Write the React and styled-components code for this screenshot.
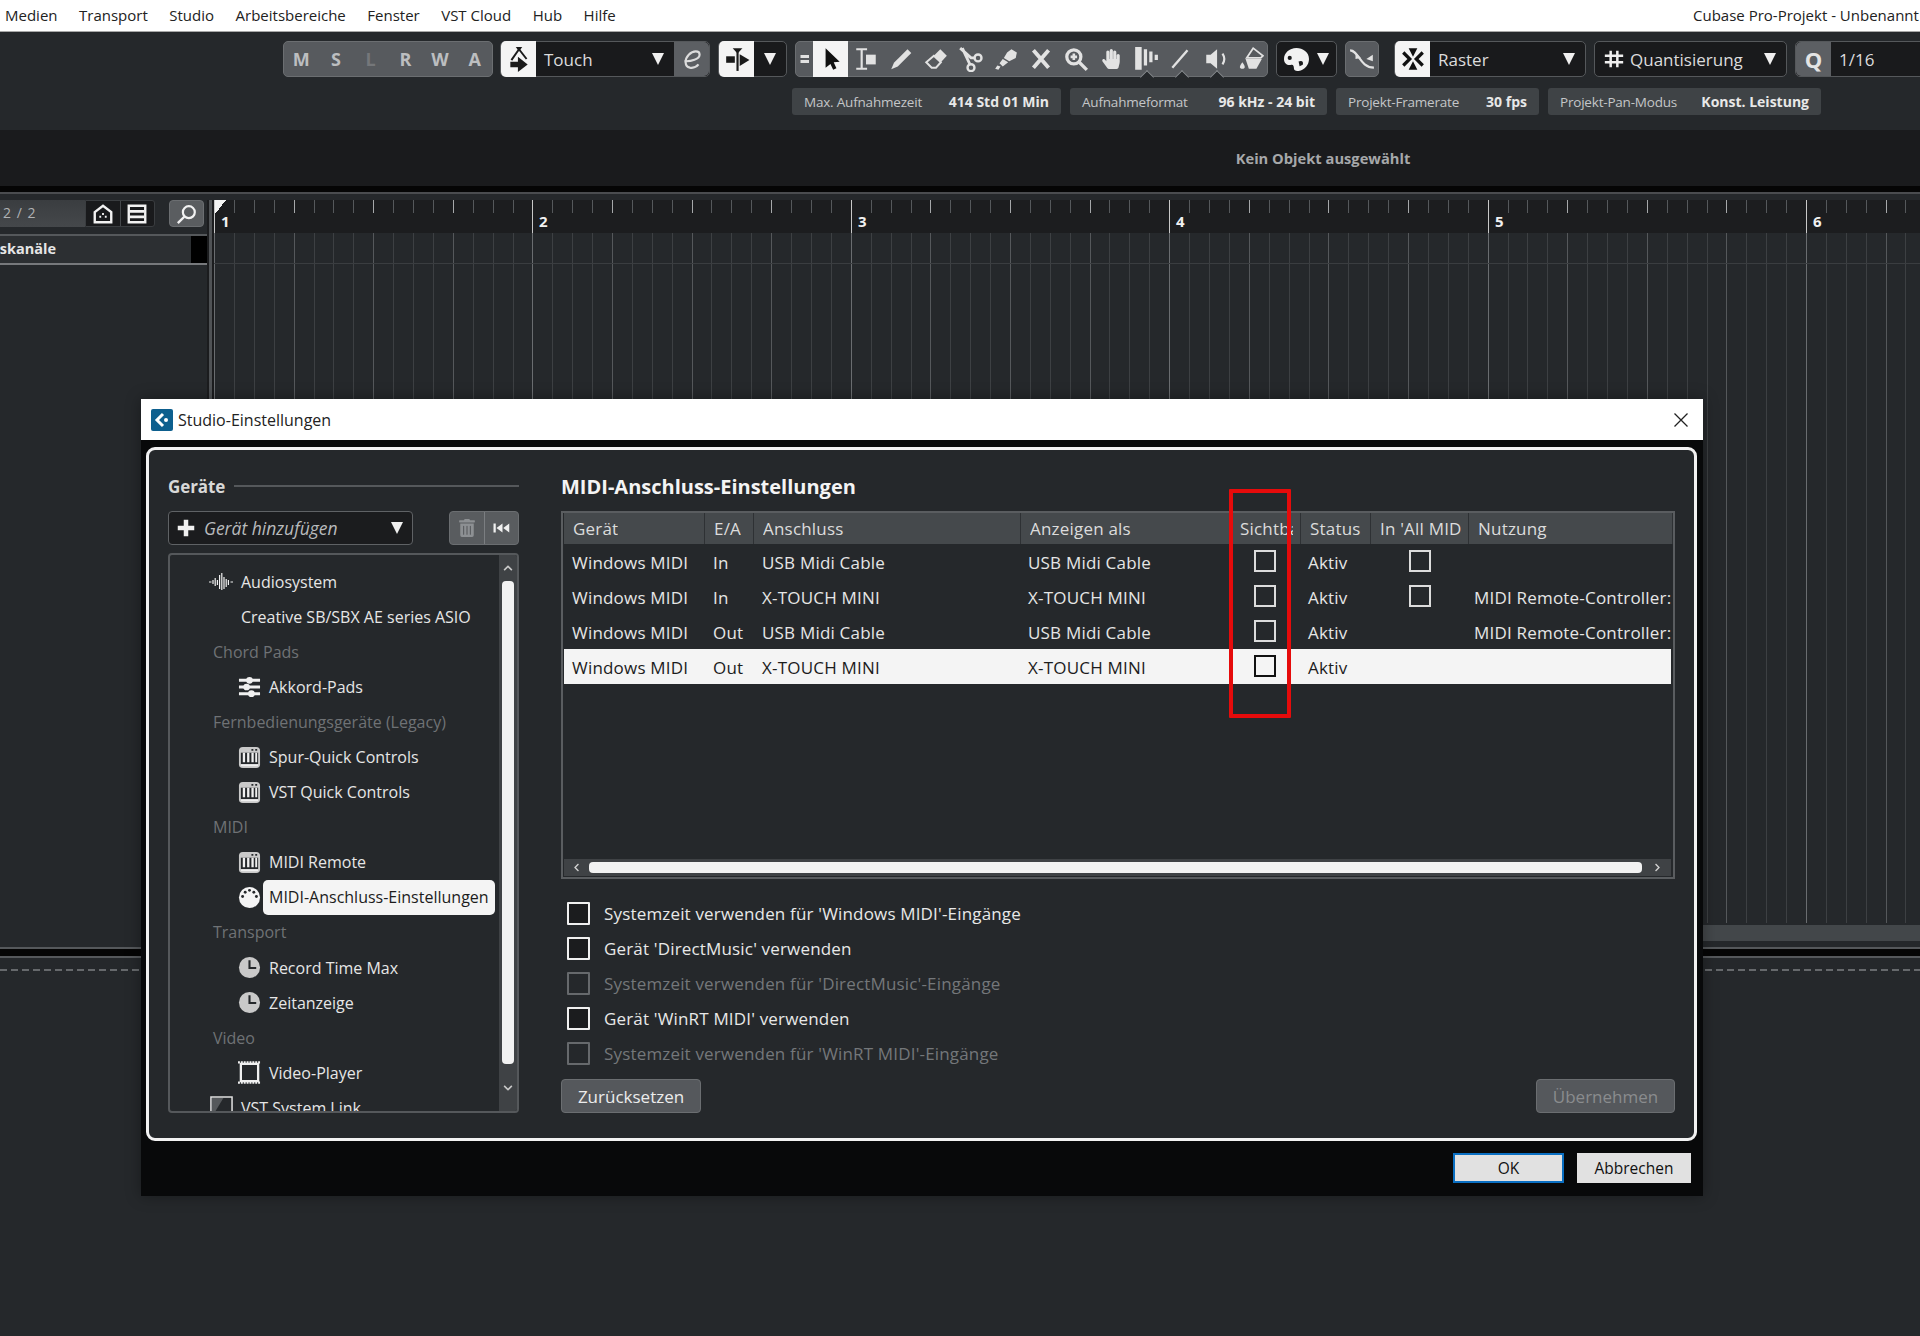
import React from 'react';
import styled, { createGlobalStyle } from 'styled-components';
import { FaHandPaper, FaTrashAlt, FaChevronUp, FaChevronDown, FaChevronLeft, FaChevronRight } from 'react-icons/fa';

const GlobalStyle = createGlobalStyle`
  html, body {
    margin: 0;
    padding: 0;
    background: #25282b;
  }
  * {
    box-sizing: border-box;
  }
  body {
    font-family: "Open Sans", "Liberation Sans", sans-serif;
    font-size: 15px;
    color: #e6e6e6;
  }
`;

const Page = styled.div`
  position: relative;
  width: 1920px;
  height: 1336px;
  overflow: hidden;
  background: #25282b;
  display: flex;
  flex-direction: column;
`;

/* ---------- menu ---------- */

const MenuBar = styled.div`
  height: 32px;
  flex: none;
  background: #fff;
  border-bottom: 1px solid #a8a8a8;
  display: flex;
  align-items: center;
  justify-content: space-between;
  padding: 0 0 2px 5px;
  color: #222;
  font-size: 15px;
  overflow: hidden;
  white-space: nowrap;
`;

const MenuItems = styled.div`
  display: flex;
  gap: 21.5px;
`;

const WindowTitle = styled.div`
  width: 227px;
  overflow: hidden;
`;

/* ---------- toolbar ---------- */

const Toolbar = styled.div`
  height: 98px;
  flex: none;
  background: #25282b;
  padding: 9px 0 0 283px;
  overflow: hidden;
`;

const ToolRow = styled.div`
  display: flex;
  gap: 8px;
  height: 36px;
  width: 1700px;
`;

const Group = styled.div`
  width: ${p => p.$w}px;
  flex: none;
  height: 36px;
  display: flex;
  align-items: stretch;
  border-radius: 5px;
  border: 1px solid ${p => (p.$dark ? '#55585b' : '#6b6e71')};
  background: ${p => (p.$dark ? '#191a1c' : '#575a5e')};
  margin-left: ${p => p.$ml || 0}px;
  overflow: visible;
`;

const Letter = styled.span`
  flex: 1;
  display: flex;
  align-items: center;
  justify-content: center;
  font-size: 18px;
  font-weight: 700;
  color: ${p => (p.$dim ? '#75777a' : '#bcbec0')};
`;

const WhiteCell = styled.div`
  width: ${p => p.$w || 35}px;
  flex: none;
  margin: -1px 0;
  background: #f4f4f4;
  display: flex;
  align-items: center;
  justify-content: center;
  border-radius: ${p => p.$r || '5px 0 0 5px'};
  position: relative;
`;

const GreyCell = styled.div`
  width: ${p => p.$w || 35}px;
  flex: none;
  display: flex;
  align-items: center;
  justify-content: center;
  background: #5c5f63;
  border-radius: ${p => p.$r || '0'};
  color: #e4e4e4;
  font-weight: 700;
  font-size: 22px;
`;

const SelectBody = styled.div`
  flex: 1;
  display: flex;
  align-items: center;
  justify-content: space-between;
  padding: 0 ${p => p.$pr || 10}px 0 ${p => p.$pl || 8}px;
  font-size: 17px;
  color: #dcdcdc;
  white-space: nowrap;
`;

const SelectLabel = styled.span`
  display: flex;
  align-items: center;
  gap: 6px;
`;

const Caret = styled.span`
  width: 0;
  height: 0;
  flex: none;
  border-left: 6px solid transparent;
  border-right: 6px solid transparent;
  border-top: 12px solid #f0f0f0;
`;

const Tool = styled.div`
  width: ${p => p.$w || 35}px;
  flex: none;
  position: relative;
  display: flex;
  align-items: center;
  justify-content: center;
  &::after {
    content: '';
    display: ${p => (p.$notch ? 'block' : 'none')};
    position: absolute;
    left: 50%;
    bottom: -1px;
    width: 9px;
    height: 9px;
    margin-left: -4px;
    transform: translateY(5px) rotate(45deg);
    border-top: 1px solid #8a8d90;
    border-left: 1px solid #8a8d90;
    background: #25282b;
  }
`;

const InfoRow = styled.div`
  display: flex;
  gap: 9px;
  margin: 11px 0 0 509px;
`;

const Chip = styled.div`
  width: ${p => p.$w}px;
  height: 27px;
  border-radius: 3px;
  background: #3f4346;
  padding: 0 12px;
  display: flex;
  align-items: center;
  justify-content: space-between;
  font-size: 13.5px;
  letter-spacing: -0.2px;
  color: #c4c6c8;
  white-space: nowrap;
`;

const ChipValue = styled.b`
  color: #e8e8e8;
  font-size: 14px;
  font-weight: 700;
  letter-spacing: 0;
`;

const ObjectBar = styled.div`
  height: 56px;
  flex: none;
  background: #1a1b1d;
  padding-left: 726px;
  display: flex;
  align-items: center;
  justify-content: center;
  font-size: 14.7px;
  font-weight: 700;
  color: #a6a8aa;
`;

const BlackBar = styled.div`
  height: 8px;
  flex: none;
  background: #050505;
  border-bottom: 2px solid #4a4c4f;
`;

/* ---------- project window ---------- */

const Workspace = styled.div`
  height: 753px;
  flex: none;
  display: flex;
  background: #25282b;
  padding-top: 6px;
`;

const TrackColumn = styled.div`
  width: 207px;
  flex: none;
`;

const TrackTools = styled.div`
  height: 27px;
  display: flex;
  align-items: stretch;
`;

const TrackCount = styled.div`
  width: 85px;
  background: linear-gradient(#3a3d40, #45484b);
  padding: 3px 0 0 3px;
  font-size: 14px;
  letter-spacing: 1px;
  color: #b0b2b4;
`;

const IconPair = styled.div`
  width: 70px;
  display: flex;
  background: #191a1c;
  border: 1px solid #3a3d40;
  border-radius: 0 3px 3px 0;
`;

const PairCell = styled.div`
  flex: 1;
  display: flex;
  align-items: center;
  justify-content: center;
  border-left: ${p => (p.$sep ? '1px solid #45484b' : 'none')};
`;

const SearchButton = styled.div`
  width: 35px;
  margin-left: 14px;
  border-radius: 4px;
  background: #5a5d60;
  border: 1px solid #6b6e71;
  display: flex;
  align-items: center;
  justify-content: center;
`;

const TrackRow = styled.div`
  height: 31px;
  margin-top: 7px;
  border-top: 2px solid #55585b;
  border-bottom: 2px solid #77797c;
  background: #2c2f32;
  display: flex;
  justify-content: space-between;
  overflow: hidden;
`;

const TrackName = styled.div`
  font-size: 14.5px;
  font-weight: 700;
  color: #e6e6e6;
  margin-left: -57px;
  padding-top: 3px;
  white-space: nowrap;
`;

const TrackFlag = styled.div`
  width: 16px;
  background: #000;
`;

const Divider = styled.div`
  width: 7px;
  flex: none;
  background: #1b1c1e;
  position: relative;
  &::before {
    content: '';
    position: absolute;
    left: 2px;
    top: 0;
    bottom: 6px;
    width: 3px;
    background: #4f5255;
  }
`;

const Arrangement = styled.div`
  flex: 1;
  min-width: 0;
  display: flex;
  flex-direction: column;
`;

const RulerSvg = styled.svg`
  display: block;
  flex: none;
  background: #1c1d1f;
`;

const GridSvg = styled.svg`
  display: block;
  flex: none;
`;

const ScrollBand = styled.div`
  height: 16px;
  flex: none;
  margin-top: 2px;
  background: #43474a;
`;

const LowerZone = styled.div`
  flex: 1;
  border-top: 2px solid #55585b;
  background: #25282b;
`;

const ZoneGap = styled.div`
  height: 7px;
  background: #050505;
  border-bottom: 2px solid #55585b;
  box-sizing: content-box;
`;

const DashedLine = styled.div`
  margin-top: 11px;
  height: 2px;
  background: repeating-linear-gradient(90deg, #66696c 0 7px, transparent 7px 11px);
`;

/* ---------- dialog ---------- */

const Dialog = styled.div`
  position: absolute;
  left: 141px;
  top: 399px;
  width: 1562px;
  height: 797px;
  background: #08090a;
  box-shadow: 0 0 14px rgba(0, 0, 0, 0.35);
  display: flex;
  flex-direction: column;
`;

const TitleBar = styled.div`
  height: 41px;
  flex: none;
  background: #fff;
  color: #222;
  display: flex;
  align-items: center;
  justify-content: space-between;
  padding: 0 14px 0 10px;
  font-size: 16px;
`;

const TitleLeft = styled.div`
  display: flex;
  align-items: center;
  gap: 5px;
`;

const Panel = styled.div`
  height: 694px;
  flex: none;
  margin: 7px 6px 0 5px;
  border: 3px solid #f2f2f2;
  border-radius: 9px;
  background: #25282b;
  padding: 24px 19px 0 19px;
  display: flex;
  gap: 42px;
`;

const DeviceColumn = styled.div`
  width: 351px;
  flex: none;
`;

const SectionHead = styled.div`
  height: 24px;
  display: flex;
  align-items: center;
  gap: 9px;
  font-size: 17px;
  font-weight: 700;
  letter-spacing: -0.1px;
  color: #d8d8d8;
`;

const HeadRule = styled.div`
  flex: 1;
  height: 2px;
  background: #55585b;
`;

const DeviceTools = styled.div`
  display: flex;
  justify-content: space-between;
  margin-top: 13px;
`;

const AddDevice = styled.div`
  width: 245px;
  height: 34px;
  border-radius: 4px;
  border: 1px solid #5f6265;
  background: #1b1c1e;
  display: flex;
  align-items: center;
  padding: 0 9px 0 8px;
`;

const AddText = styled.span`
  flex: 1;
  margin-left: 9px;
  font-style: italic;
  font-size: 17.5px;
  color: #b8babc;
  white-space: nowrap;
`;

const DeviceButtons = styled.div`
  width: 70px;
  height: 34px;
  display: flex;
  border-radius: 4px;
  border: 1px solid #6b6e71;
  background: #595c5f;
`;

const DeviceButton = styled.div`
  flex: 1;
  display: flex;
  align-items: center;
  justify-content: center;
  border-left: ${p => (p.$sep ? '1px solid #7b7e81' : 'none')};
`;

const TreeBox = styled.div`
  height: 560px;
  margin-top: 8px;
  border: 2px solid #55585b;
  border-radius: 4px;
  display: flex;
  overflow: hidden;
`;

const TreeList = styled.div`
  flex: 1;
  min-width: 0;
  padding-top: 9px;
  overflow: hidden;
`;

const TreeRow = styled.div`
  height: 35.1px;
  display: flex;
  align-items: center;
  padding-left: ${p => p.$indent}px;
  font-size: 16px;
  white-space: nowrap;
  color: ${p => (p.$group ? '#6f7275' : '#e6e6e6')};
`;

const TreeIcon = styled.span`
  width: ${p => p.$w || 23}px;
  flex: none;
  margin-right: ${p => p.$gap || 8}px;
  display: flex;
  align-items: center;
  justify-content: center;
`;

const TreeLabel = styled.span`
  ${p => p.$selected && `
    background: #f4f4f4;
    color: #1c1c1c;
    border-radius: 5px;
    width: 232px;
    height: 35px;
    margin-left: -6px;
    padding-left: 6px;
    display: flex;
    align-items: center;
  `}
`;

const VScroll = styled.div`
  width: 18px;
  flex: none;
  background: #3f4245;
  display: flex;
  flex-direction: column;
  align-items: center;
  color: #c8c8c8;
`;

const VArrow = styled.div`
  height: ${p => p.$h}px;
  flex: none;
  display: flex;
  align-items: center;
  justify-content: center;
`;

const VThumb = styled.div`
  width: 12px;
  height: 483px;
  flex: none;
  border-radius: 4px;
  background: #f2f2f2;
`;

const MainColumn = styled.div`
  width: 1114px;
  flex: none;
`;

const MainTitle = styled.div`
  height: 24px;
  display: flex;
  align-items: center;
  font-size: 20px;
  font-weight: 700;
  color: #f4f4f4;
`;

const Table = styled.div`
  height: 368px;
  margin-top: 13px;
  border: 2px solid #5a5d60;
  display: flex;
  flex-direction: column;
`;

const columns = '141px 49px 267px 210px 70px 70px 98px 1fr';

const HeadRow = styled.div`
  display: grid;
  grid-template-columns: ${columns};
  height: 31px;
  flex: none;
  margin-left: 1px;
  background: #45494c;
`;

const HeadCell = styled.div`
  padding: 0 7px 0 ${p => p.$pl || 9}px;
  display: flex;
  align-items: center;
  border-right: 1px solid #2e3134;
  font-size: 17px;
  letter-spacing: 0.2px;
  color: #dcdcdc;
  white-space: nowrap;
  overflow: hidden;
`;

const HeadText = styled.span`
  display: block;
  overflow: hidden;
`;

const BodyRow = styled.div`
  display: grid;
  grid-template-columns: ${columns};
  height: 35px;
  flex: none;
  margin: 0 2px 0 1px;
  background: ${p => (p.$selected ? '#f4f4f4' : 'transparent')};
  color: ${p => (p.$selected ? '#1c1c1c' : '#e6e6e6')};
`;

const BodyCell = styled.div`
  padding-left: ${p => p.$pl || 0}px;
  padding-right: ${p => p.$pr || 0}px;
  padding-top: 1px;
  display: flex;
  align-items: center;
  justify-content: ${p => (p.$center ? 'center' : 'flex-start')};
  font-size: 17px;
  letter-spacing: 0.2px;
  white-space: nowrap;
  overflow: hidden;
`;

const SmallBox = styled.span`
  width: 22px;
  height: 22px;
  margin-bottom: 3px;
  border: 2px solid ${p => (p.$selected ? '#111' : '#dcdcdc')};
`;

const TableFill = styled.div`
  flex: 1;
`;

const HScroll = styled.div`
  height: 17px;
  flex: none;
  margin: 0 2px 1px 1px;
  background: #3f4245;
  display: flex;
  align-items: center;
  color: #d0d0d0;
`;

const HArrow = styled.div`
  width: ${p => p.$w}px;
  flex: none;
  display: flex;
  align-items: center;
  justify-content: center;
`;

const HThumb = styled.div`
  width: 1053px;
  height: 11px;
  flex: none;
  border-radius: 4px;
  background: #f2f2f2;
`;

const Options = styled.div`
  margin-top: 17px;
  padding-left: 6px;
`;

const OptionRow = styled.label`
  height: 35px;
  display: flex;
  align-items: center;
  gap: 14px;
  font-size: 17px;
  letter-spacing: 0.17px;
  color: ${p => (p.$off ? '#74777a' : '#e8e8e8')};
`;

const OptionBox = styled.span`
  width: 23px;
  height: 23px;
  flex: none;
  border-radius: 1px;
  border: 2px solid ${p => (p.$off ? '#66696c' : '#f0f0f0')};
  background: ${p => (p.$off ? 'transparent' : '#1b1c1e')};
`;

const PanelButtons = styled.div`
  display: flex;
  justify-content: space-between;
  margin-top: 8px;
`;

const PanelButton = styled.div`
  width: ${p => p.$w}px;
  height: 34px;
  border-radius: 4px;
  border: 1px solid #6b6e71;
  background: #55585c;
  display: flex;
  align-items: center;
  justify-content: center;
  font-size: 17px;
  color: ${p => (p.$off ? '#8a8c8e' : '#ececec')};
`;

const Footer = styled.div`
  display: flex;
  justify-content: flex-end;
  gap: 13px;
  padding: 12px 12px 0 0;
`;

const WinButton = styled.div`
  width: ${p => p.$w}px;
  height: 30px;
  background: #e1e1e1;
  border: ${p => (p.$focus ? '2px solid #0a6fc2' : 'none')};
  display: flex;
  align-items: center;
  justify-content: center;
  font-size: 15.5px;
  color: #111;
`;

const Annotation = styled.div`
  position: absolute;
  left: 1229px;
  top: 489px;
  width: 62px;
  height: 229px;
  border: 4px solid #e60b0b;
  border-radius: 1px;
`;

/* ---------- drawings ---------- */

const Ico = ({ size = 24, children, fill = 'none', ...rest }) => (
  <svg width={size} height={size} viewBox="0 0 24 24" fill={fill} {...rest}>
    {children}
  </svg>
);

const LIGHT = '#e2e2e2';

const AutoIcon = () => (
  <Ico size={26}>
    <path d="M12 3L5 13M12 3l7 9" stroke="#1a1a1a" strokeWidth="1.8" />
    <path d="M9 1h6l-3 4z" fill="#1a1a1a" />
    <path d="M4 14.5h7V10l9 7-9 7v-4.5H4z" fill="#1a1a1a" />
  </Ico>
);

const EIcon = () => (
  <Ico size={26}>
    <path d="M5 14c6 .5 14-2 14-6 0-4-6-4-10 0-4 4-4 11 1 12 3 .5 6-.5 8-3" stroke="#dcdcdc" strokeWidth="2" />
  </Ico>
);

const SplitIcon = () => (
  <Ico size={26}>
    <path d="M8 2h9l-4.5 5z" fill="#1a1a1a" />
    <path d="M12.5 4v19" stroke="#1a1a1a" strokeWidth="2" />
    <path d="M2 9.5h8v6H2z" fill="#1a1a1a" />
    <path d="M14.5 7.5l9 5.5-9 5.5z" fill="#1a1a1a" />
  </Ico>
);

const HandleIcon = () => (
  <Ico size={12}>
    <path d="M3 4h17v6H3zM3 14h17v6H3z" fill={LIGHT} />
  </Ico>
);

const ToolIcons = {
  arrow: <Ico size={26}><path d="M7 2v18l4.5-3.5L14 22l3-1.5-2.5-5.5 5.5-.5z" fill="#111" /></Ico>,
  range: (
    <Ico size={26}>
      <path d="M3 3h10M3 21h10M8 3v18" stroke={LIGHT} strokeWidth="2" />
      <path d="M12 8h9v9h-9z" fill={LIGHT} />
    </Ico>
  ),
  pen: <Ico size={26}><path d="M18 3l3.5 3.5L9 19l-6 2.5L5.5 15.5z" fill={LIGHT} /></Ico>,
  eraser: (
    <Ico size={26}>
      <path d="M16 3l6 6-5.5 6-6.5-6z" fill={LIGHT} />
      <path d="M10 9l6.5 6-4.5 5H8l-5-5z" stroke={LIGHT} strokeWidth="1.8" />
    </Ico>
  ),
  scissors: (
    <Ico size={26}>
      <path d="M2 2l10 9 3 0M4 2l7 15" stroke={LIGHT} strokeWidth="2.6" />
      <circle cx="18.5" cy="11" r="3.2" stroke={LIGHT} strokeWidth="2.2" />
      <circle cx="12" cy="20" r="3.2" stroke={LIGHT} strokeWidth="2.2" />
    </Ico>
  ),
  glue: (
    <Ico size={26}>
      <path d="M13 6l4-3 5 3-1 5-6 3-5-3z" fill={LIGHT} />
      <path d="M9 12l5 3-5 4-3-3zM4 18l3 1-2 3-3-1z" fill={LIGHT} />
    </Ico>
  ),
  mute: <Ico size={26}><path d="M5 4l14 16M19 4L5 20" stroke={LIGHT} strokeWidth="3.6" /></Ico>,
  zoom: (
    <Ico size={26}>
      <circle cx="10" cy="10" r="6.5" stroke={LIGHT} strokeWidth="3" />
      <path d="M15 15l7 7" stroke={LIGHT} strokeWidth="3" />
      <path d="M10 7v6M7 10h6" stroke={LIGHT} strokeWidth="2.4" />
    </Ico>
  ),
  hand: <FaHandPaper size={20} color={LIGHT} />,
  comp: <Ico size={26}><path d="M2 1h6v21H2zM10 3h3v15h-3zM15 5h3v10h-3zM20 8h3v5h-3z" fill={LIGHT} /></Ico>,
  line: <Ico size={26}><path d="M4 20L18 4" stroke={LIGHT} strokeWidth="2.2" /></Ico>,
  speaker: (
    <Ico size={26}>
      <path d="M3 8h4l6-5v18l-6-5H3z" fill={LIGHT} />
      <path d="M18 7c2 3 2 7 0 10" stroke={LIGHT} strokeWidth="2" />
    </Ico>
  ),
  bucket: (
    <Ico size={26}>
      <path d="M14 2l9 7-2 2H8z" stroke={LIGHT} strokeWidth="1.6" />
      <path d="M7 12h15l-5 9H10z" fill={LIGHT} />
      <path d="M4 15c-3 4-3 6 0 6s3-2 0-6z" fill={LIGHT} />
    </Ico>
  ),
};

const PaletteIcon = () => (
  <Ico size={25}>
    <path
      d="M12 1C5 1 0 6 0 11.5c0 5 4 6.5 7 5.5 2-.5 2.5 1.5 2.5 3.5 0 2 2 3 4.5 2.5 6-1 10-6 10-11.5C24 5 18 1 12 1z"
      fill="#f2f2f2"
    />
    <circle cx="5.5" cy="10.5" r="2" fill="#191a1c" />
    <path d="M14 14c3-1.5 5 0 4 3l-3 1.5z" fill="#191a1c" />
  </Ico>
);

const CurveIcon = () => (
  <Ico size={26}>
    <path d="M1 4c8 0 9 16 22 16" stroke={LIGHT} strokeWidth="2" />
    <path d="M6 6l5 5-5 1zM22 8l-6 4 6 2z" fill={LIGHT} />
  </Ico>
);

const SnapIcon = () => (
  <Ico size={26}>
    <path d="M8 2h8l-4 8zM8 22h8l-4-8z" fill="#111" />
    <path d="M3 6l6 6-6 6M21 6l-6 6 6 6" stroke="#111" strokeWidth="3" />
  </Ico>
);

const HashIcon = () => (
  <Ico size={20}>
    <path d="M8 2v20M16 2v20M1 8h22M1 16h22" stroke="#efefef" strokeWidth="3" />
  </Ico>
);

const HomeIcon = () => (
  <Ico size={22}>
    <path d="M3 10l9-7 9 7v11H3z" stroke="#f2f2f2" strokeWidth="2.6" />
    <path d="M8 14h2v2H8zM14 14h2v2h-2zM11 11h2v2h-2z" fill="#f2f2f2" />
  </Ico>
);

const ListIcon = () => (
  <Ico size={22}>
    <path d="M3 3h18v18H3z" stroke="#f2f2f2" strokeWidth="2.6" />
    <path d="M4 9h16M4 15h16" stroke="#f2f2f2" strokeWidth="3" />
  </Ico>
);

const SearchIcon = () => (
  <Ico size={22}>
    <circle cx="14" cy="10" r="6.5" stroke="#f2f2f2" strokeWidth="2.4" />
    <path d="M9 15l-7 7" stroke="#f2f2f2" strokeWidth="2.6" />
  </Ico>
);

const CubaseLogo = () => (
  <svg width="22" height="22" viewBox="0 0 22 22">
    <rect width="22" height="22" rx="2" fill="#0d5f8e" />
    <path d="M12 5l-6 6 6 6" stroke="#fff" strokeWidth="3" fill="none" />
    <circle cx="15" cy="11" r="2" fill="#fff" />
  </svg>
);

const CloseIcon = () => (
  <svg width="16" height="16" viewBox="0 0 16 16">
    <path d="M1.5 1.5l13 13M14.5 1.5l-13 13" stroke="#222" strokeWidth="1.3" />
  </svg>
);

const PlusIcon = () => (
  <Ico size={18}><path d="M9 1h6v8h8v6h-8v8H9v-8H1V9h8z" fill="#f0f0f0" /></Ico>
);

const SkipIcon = () => (
  <Ico size={18}><path d="M2 6h3v12H2zM14 6v12L6 12zM23 6v12l-8-6z" fill="#f0f0f0" /></Ico>
);

const WaveIcon = () => (
  <svg width="24" height="20" viewBox="0 0 24 20" fill="none">
    <path
      d="M0 10h2.5M4 8v4M6.2 6v8M8.4 8v5M10.6 3v14M12.8 1v17M15 5v12M17.2 7v8M19.4 8v5M21.5 10h2.5"
      stroke="#f0f0f0"
      strokeWidth="1.2"
    />
  </svg>
);

const PadsIcon = () => (
  <Ico size={23}>
    <path d="M1 4h22v3H1zM1 11h22v3H1zM1 18h22v3H1z" fill="#f0f0f0" />
    <circle cx="12" cy="5.5" r="3.5" fill="#f0f0f0" />
    <circle cx="9" cy="12.5" r="3.5" fill="#f0f0f0" />
    <circle cx="14" cy="19.5" r="3.5" fill="#f0f0f0" />
  </Ico>
);

const KeysIcon = () => (
  <Ico size={23}>
    <rect x="1" y="1" width="22" height="22" rx="4" fill="#c9c9c9" />
    <rect x="3" y="7" width="18" height="12" fill="#25282b" />
    <path d="M5 7h2.4v10H5zM9.5 7h2.4v10H9.5zM14 7h2.4v10H14zM18 7h2v10h-2zM3 19h18v2H3z" fill="#f0f0f0" />
    <path d="M14 3h2v2h-2zM18 3h2v2h-2z" fill="#25282b" />
  </Ico>
);

const DinIcon = () => (
  <Ico size={23}>
    <circle cx="12" cy="12" r="11" fill="#f4f4f4" />
    <circle cx="4.8" cy="11" r="1.5" fill="#25282b" />
    <circle cx="7.5" cy="6.5" r="1.5" fill="#25282b" />
    <circle cx="12" cy="4.5" r="1.5" fill="#25282b" />
    <circle cx="16.5" cy="6.5" r="1.5" fill="#25282b" />
    <circle cx="19.2" cy="11" r="1.5" fill="#25282b" />
  </Ico>
);

const ClockIcon = () => (
  <Ico size={23}>
    <circle cx="12" cy="12" r="11" fill="#c9c9c9" />
    <path d="M12 4.5V12.5h7" stroke="#25282b" strokeWidth="2.2" fill="none" />
  </Ico>
);

const FilmIcon = () => (
  <Ico size={23}>
    <path d="M3 3h18v18H3z" stroke="#f0f0f0" strokeWidth="2.4" />
    <path d="M0 1.5h24M0 22.5h24" stroke="#f0f0f0" strokeWidth="2.4" strokeDasharray="2 1" />
  </Ico>
);

const LinkIcon = () => (
  <Ico size={23}>
    <path d="M1 1h22v22H1z" stroke="#e0e0e0" strokeWidth="1.6" />
    <path d="M2 22L14 2H2z" fill="#55585b" />
  </Ico>
);

/* ---------- ruler + grid ---------- */

const ARR_WIDTH = 1706;
const SUB = 318.4 / 16;
const subTicks = Array.from({ length: 86 }, (_, i) => i);

const Ruler = () => (
  <RulerSvg width={ARR_WIDTH} height={33} shapeRendering="crispEdges">
    {subTicks.map(i => {
      const x = Math.round(i * SUB);
      const bar = i % 16 === 0;
      const beat = i % 4 === 0;
      return (
        <line
          key={i}
          x1={x + 0.5}
          x2={x + 0.5}
          y1={0}
          y2={bar ? 33 : 13}
          stroke={bar ? '#c8c8c8' : beat ? '#a6a8aa' : '#55585b'}
        />
      );
    })}
    {[1, 2, 3, 4, 5, 6].map(n => (
      <text
        key={n}
        x={Math.round((n - 1) * 318.4) + 7}
        y={27}
        fontFamily="Open Sans, sans-serif"
        fontSize="15"
        fontWeight="700"
        fill="#f0f0f0"
      >
        {n}
      </text>
    ))}
    <path d="M1 0h11L1 14z" fill="#f4f4f4" />
  </RulerSvg>
);

const ArrangeGrid = () => (
  <GridSvg width={ARR_WIDTH} height={690} shapeRendering="crispEdges">
    {subTicks.map(i => {
      const x = Math.round(i * SUB);
      return (
        <line
          key={i}
          x1={x + 0.5}
          x2={x + 0.5}
          y1={0}
          y2={690}
          stroke={i % 16 === 0 ? '#6a6d70' : i % 4 === 0 ? '#55585b' : '#3d4043'}
        />
      );
    })}
    <line x1={0} x2={ARR_WIDTH} y1={30.5} y2={30.5} stroke="#3a3d40" />
  </GridSvg>
);

/* ---------- data ---------- */

const tree = [
  { indent: 39, icon: <WaveIcon />, w: 24, label: 'Audiosystem' },
  { indent: 71, label: 'Creative SB/SBX AE series ASIO' },
  { indent: 43, group: true, label: 'Chord Pads' },
  { indent: 68, icon: <PadsIcon />, label: 'Akkord-Pads' },
  { indent: 43, group: true, label: 'Fernbedienungsgeräte (Legacy)' },
  { indent: 68, icon: <KeysIcon />, label: 'Spur-Quick Controls' },
  { indent: 68, icon: <KeysIcon />, label: 'VST Quick Controls' },
  { indent: 43, group: true, label: 'MIDI' },
  { indent: 68, icon: <KeysIcon />, label: 'MIDI Remote' },
  { indent: 68, icon: <DinIcon />, label: 'MIDI-Anschluss-Einstellungen', selected: true },
  { indent: 43, group: true, label: 'Transport' },
  { indent: 68, icon: <ClockIcon />, label: 'Record Time Max' },
  { indent: 68, icon: <ClockIcon />, label: 'Zeitanzeige' },
  { indent: 43, group: true, label: 'Video' },
  { indent: 68, icon: <FilmIcon />, label: 'Video-Player' },
  { indent: 40, icon: <LinkIcon />, label: 'VST System Link' },
];

const heads = ['Gerät', 'E/A', 'Anschluss', 'Anzeigen als', 'Sichtbar', 'Status', "In 'All MIDI'", 'Nutzung'];

const ports = [
  { io: 'In', port: 'USB Midi Cable', all: true },
  { io: 'In', port: 'X-TOUCH MINI', all: true, use: 'MIDI Remote-Controller:' },
  { io: 'Out', port: 'USB Midi Cable', use: 'MIDI Remote-Controller:' },
  { io: 'Out', port: 'X-TOUCH MINI', selected: true },
];

const options = [
  { label: "Systemzeit verwenden für 'Windows MIDI'-Eingänge" },
  { label: "Gerät 'DirectMusic' verwenden" },
  { label: "Systemzeit verwenden für 'DirectMusic'-Eingänge", off: true },
  { label: "Gerät 'WinRT MIDI' verwenden" },
  { label: "Systemzeit verwenden für 'WinRT MIDI'-Eingänge", off: true },
];

const menu = ['Medien', 'Transport', 'Studio', 'Arbeitsbereiche', 'Fenster', 'VST Cloud', 'Hub', 'Hilfe'];

const tools = [
  { key: 'range' },
  { key: 'pen' },
  { key: 'eraser' },
  { key: 'scissors' },
  { key: 'glue' },
  { key: 'mute' },
  { key: 'zoom' },
  { key: 'hand' },
  { key: 'comp', notch: true },
  { key: 'line', notch: true },
  { key: 'speaker', notch: true },
  { key: 'bucket' },
];

const App = () => (
  <Page>
    <GlobalStyle />
    <MenuBar>
      <MenuItems>
        {menu.map(m => (
          <span key={m}>{m}</span>
        ))}
      </MenuItems>
      <WindowTitle>Cubase Pro-Projekt - Unbenannt1</WindowTitle>
    </MenuBar>

    <Toolbar>
      <ToolRow>
        <Group $w={210}>
          <Letter>M</Letter>
          <Letter>S</Letter>
          <Letter $dim>L</Letter>
          <Letter>R</Letter>
          <Letter>W</Letter>
          <Letter>A</Letter>
        </Group>
        <Group $w={210} $dark $ml={-1}>
          <WhiteCell><AutoIcon /></WhiteCell>
          <SelectBody>
            Touch
            <Caret />
          </SelectBody>
          <GreyCell $r="0 5px 5px 0"><EIcon /></GreyCell>
        </Group>
        <Group $w={69} $dark>
          <WhiteCell><SplitIcon /></WhiteCell>
          <SelectBody $pr={10} $pl={10}><Caret /></SelectBody>
        </Group>
        <Group $w={473}>
          <Tool $w={17}><HandleIcon /></Tool>
          <WhiteCell $r="0"><Tool>{ToolIcons.arrow}</Tool></WhiteCell>
          {tools.map(t => (
            <Tool key={t.key} $notch={t.notch}>{ToolIcons[t.key]}</Tool>
          ))}
        </Group>
        <Group $w={61} $dark>
          <Tool $w={38}><PaletteIcon /></Tool>
          <SelectBody $pl={2} $pr={6}><Caret /></SelectBody>
        </Group>
        <Group $w={34}>
          <Tool $w={32}><CurveIcon /></Tool>
        </Group>
        <Group $w={192} $dark $ml={7}>
          <WhiteCell><SnapIcon /></WhiteCell>
          <SelectBody>
            Raster
            <Caret />
          </SelectBody>
        </Group>
        <Group $w={193} $dark>
          <SelectBody $pl={9}>
            <SelectLabel><HashIcon />Quantisierung</SelectLabel>
            <Caret />
          </SelectBody>
        </Group>
        <Group $w={160} $dark>
          <GreyCell $r="5px 0 0 5px">Q</GreyCell>
          <SelectBody>1/16</SelectBody>
        </Group>
      </ToolRow>
      <InfoRow>
        <Chip $w={269}>Max. Aufnahmezeit<ChipValue>414 Std 01 Min</ChipValue></Chip>
        <Chip $w={257}>Aufnahmeformat<ChipValue>96 kHz - 24 bit</ChipValue></Chip>
        <Chip $w={203}>Projekt-Framerate<ChipValue>30 fps</ChipValue></Chip>
        <Chip $w={273}>Projekt-Pan-Modus<ChipValue>Konst. Leistung</ChipValue></Chip>
      </InfoRow>
    </Toolbar>

    <ObjectBar>Kein Objekt ausgewählt</ObjectBar>
    <BlackBar />

    <Workspace>
      <TrackColumn>
        <TrackTools>
          <TrackCount>2 / 2</TrackCount>
          <IconPair>
            <PairCell><HomeIcon /></PairCell>
            <PairCell $sep><ListIcon /></PairCell>
          </IconPair>
          <SearchButton><SearchIcon /></SearchButton>
        </TrackTools>
        <TrackRow>
          <TrackName>Eingangskanäle</TrackName>
          <TrackFlag />
        </TrackRow>
      </TrackColumn>
      <Divider />
      <Arrangement>
        <Ruler />
        <ArrangeGrid />
        <ScrollBand />
      </Arrangement>
    </Workspace>

    <LowerZone>
      <ZoneGap />
      <DashedLine />
    </LowerZone>

    <Dialog>
      <TitleBar>
        <TitleLeft>
          <CubaseLogo />
          Studio-Einstellungen
        </TitleLeft>
        <CloseIcon />
      </TitleBar>
      <Panel>
        <DeviceColumn>
          <SectionHead>
            Geräte
            <HeadRule />
          </SectionHead>
          <DeviceTools>
            <AddDevice>
              <PlusIcon />
              <AddText>Gerät hinzufügen</AddText>
              <Caret />
            </AddDevice>
            <DeviceButtons>
              <DeviceButton><FaTrashAlt size={18} color="#8d9093" /></DeviceButton>
              <DeviceButton $sep><SkipIcon /></DeviceButton>
            </DeviceButtons>
          </DeviceTools>
          <TreeBox>
            <TreeList>
              {tree.map(row => (
                <TreeRow key={row.label} $indent={row.indent} $group={row.group}>
                  {row.icon && <TreeIcon $w={row.w}>{row.icon}</TreeIcon>}
                  <TreeLabel $selected={row.selected}>{row.label}</TreeLabel>
                </TreeRow>
              ))}
            </TreeList>
            <VScroll>
              <VArrow $h={26}><FaChevronUp size={10} /></VArrow>
              <VThumb />
              <VArrow $h={47}><FaChevronDown size={10} /></VArrow>
            </VScroll>
          </TreeBox>
        </DeviceColumn>

        <MainColumn>
          <MainTitle>MIDI-Anschluss-Einstellungen</MainTitle>
          <Table>
            <HeadRow>
              {heads.map(h => (
                <HeadCell key={h}><HeadText>{h}</HeadText></HeadCell>
              ))}
            </HeadRow>
            {ports.map((p, i) => (
              <BodyRow key={i} $selected={p.selected}>
                <BodyCell $pl={8}>Windows MIDI</BodyCell>
                <BodyCell $pl={8}>{p.io}</BodyCell>
                <BodyCell $pl={8}>{p.port}</BodyCell>
                <BodyCell $pl={7}>{p.port}</BodyCell>
                <BodyCell $center $pr={2}><SmallBox $selected={p.selected} /></BodyCell>
                <BodyCell $pl={7}>Aktiv</BodyCell>
                <BodyCell $center $pr={1}>{p.all && <SmallBox />}</BodyCell>
                <BodyCell $pl={5}>{p.use}</BodyCell>
              </BodyRow>
            ))}
            <TableFill />
            <HScroll>
              <HArrow $w={25}><FaChevronLeft size={9} /></HArrow>
              <HThumb />
              <HArrow $w={31}><FaChevronRight size={9} /></HArrow>
            </HScroll>
          </Table>
          <Options>
            {options.map(o => (
              <OptionRow key={o.label} $off={o.off}>
                <OptionBox $off={o.off} />
                {o.label}
              </OptionRow>
            ))}
          </Options>
          <PanelButtons>
            <PanelButton $w={140}>Zurücksetzen</PanelButton>
            <PanelButton $w={139} $off>Übernehmen</PanelButton>
          </PanelButtons>
        </MainColumn>
      </Panel>
      <Footer>
        <WinButton $w={111} $focus>OK</WinButton>
        <WinButton $w={114}>Abbrechen</WinButton>
      </Footer>
    </Dialog>

    <Annotation />
  </Page>
);

export default App;
